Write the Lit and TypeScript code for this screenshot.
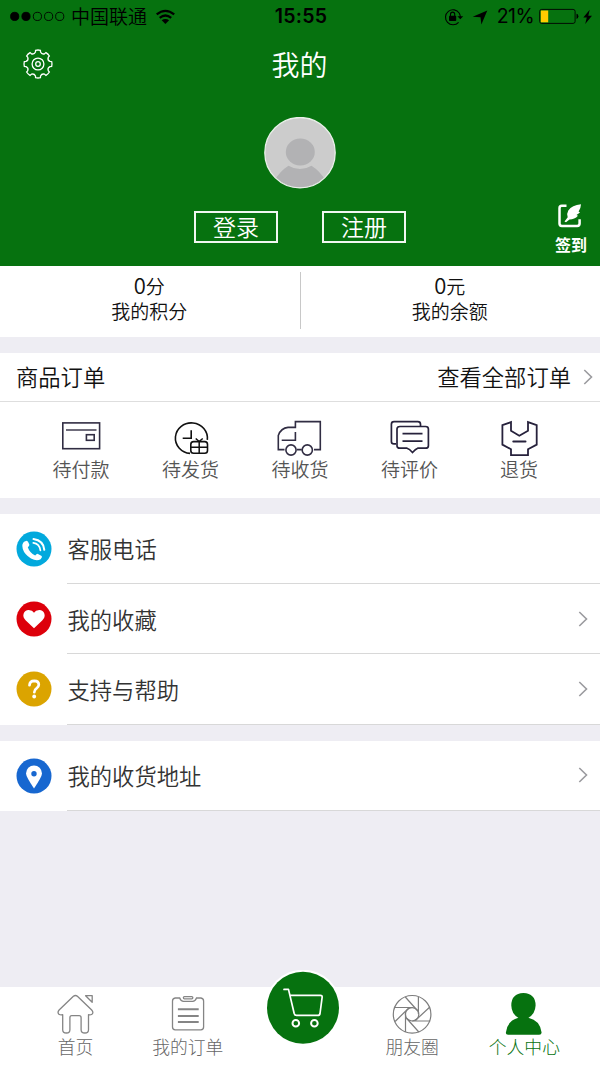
import { LitElement, html, svg, css, SVGTemplateResult } from 'lit';
import { customElement, property } from 'lit/decorators.js';

const gearPath = (() => {
  const at = (r: number, deg: number) => {
    const a = (deg * Math.PI) / 180;
    return `${(15 + r * Math.cos(a)).toFixed(2)} ${(15 + r * Math.sin(a)).toFixed(2)}`;
  };
  let d = `M${at(13.9, -11)}`;
  for (let i = 0; i < 8; i++) {
    const t = i * 45;
    d += `Q${at(14.3, t)} ${at(13.9, t + 10)}L${at(12.2, t + 12)}Q${at(10, t + 22.5)} ${at(12.2, t + 33)}L${at(13.9, t + 35)}`;
  }
  return d + 'Z';
})();

interface Glyph {
  box: [number, number, number, number];
  body: SVGTemplateResult;
}

const glyphs: Record<string, Glyph> = {
  signal: {
    box: [9, 10, 56, 13],
    body: svg`<g stroke="#000" stroke-width=".9" fill="none">
      <circle cx="14.7" cy="16.4" r="4.1" fill="#000"/><circle cx="26" cy="16.4" r="4.1" fill="#000"/>
      <circle cx="37.4" cy="16.4" r="4.1"/><circle cx="48.6" cy="16.4" r="4.1"/><circle cx="59.7" cy="16.4" r="4.1"/></g>`,
  },
  wifi: {
    box: [155, 8, 21, 16],
    body: svg`<g fill="none" stroke="#000" stroke-width="2.3"><path d="M156.700 13.400Q165.400 6.400 174.200 13.400"/><path d="M159.700 16.900Q165.400 12.200 171.200 16.900"/></g><path d="M161.700 19.200Q165.400 16.700 169.100 19.200L165.400 22.900Z"/>`,
  },
  lock: {
    box: [444, 7, 21, 18],
    body: svg`<path d="M460.300 12.200A7.500 7.500 0 1 0 459.600 21.300M460.300 12.200Q461.300 14 461.300 16" fill="none" stroke="#000" stroke-width="1.1"/><path d="M458.400 15.200H464.200L461.300 18.300Z"/><rect x="450" y="14.800" width="7.200" height="5.200" rx=".7"/><path d="M451.500 15V13.200a2.100 2.100 0 0 1 4.200 0V15" fill="none" stroke="#000" stroke-width="1.100"/>`,
  },
  location: { box: [473, 8, 16, 16], body: svg`<path d="M488.300 9.400L482.400 23.500L481.500 16.200L473.700 15.700Z"/>` },
  battery: {
    box: [539, 8, 41, 17],
    body: svg`<rect x="539.700" y="9.400" width="35.400" height="14" rx="2" fill="none" stroke="#000" stroke-width=".9"/><rect x="540.800" y="10.500" width="7.400" height="11.800" fill="#ffcc00"/><path d="M576.500 13.700Q578.400 14 578.400 16.300T576.500 19Z"/>`,
  },
  bolt: { box: [582, 8, 11, 16], body: svg`<path d="M589.700 8.800L583.300 16.500H586.800L585.200 23.100L592 14.800H588.300Z"/>` },
  gear: {
    box: [0, 0, 30, 30],
    body: svg`<g fill="none" stroke="#fff" stroke-width="1.300"><path d=${gearPath}/><circle cx="15" cy="15" r="5.900"/><circle cx="15" cy="15" r="2.300"/></g>`,
  },
  avatar: {
    box: [264, 117, 72, 72],
    body: svg`<clipPath id="round"><circle cx="300" cy="152.700" r="34.800"/></clipPath><circle cx="300" cy="152.700" r="35.200" fill="#ccc"/><g clip-path="url(#round)"><path fill="#b2b2b4" d="M274 181Q280 171 288.500 165.700Q300 172.500 311.500 165.700Q320 171 326 181V192H274Z"/></g><ellipse cx="300.300" cy="152" rx="14.500" ry="13.500" fill="#b2b2b4"/><circle cx="300" cy="152.700" r="35.200" fill="none" stroke="#eaf0ea" stroke-width="1.300"/>`,
  },
  sign: {
    box: [558, 203, 26, 26],
    body: svg`<path d="M566.500 205.800H561.800Q559.500 205.800 559.500 208.200V223.500Q559.500 225.900 561.800 225.900H577.200Q579.600 225.900 579.600 223.500V219.300" fill="none" stroke="#fff" stroke-width="2.500"/><path fill="#fff" d="M581 204.200Q572 205 568.300 210.500Q566.300 214 567.700 217.300L564.500 221.600L566 222.200L569.500 219.500Q574.500 219.500 578 215.700L576.500 215L580 212.600L578.600 211.600Q580.800 208.500 581 204.200Z"/>`,
  },
  pay: {
    box: [58, 418, 46, 38],
    body: svg`<g fill="none" stroke="#312d43"><rect x="62.800" y="422.900" width="36.800" height="25.800" stroke-width="1.600"/><path d="M66 430H96.500" stroke-width="1.400"/><rect x="86.400" y="434.700" width="7.800" height="5.600" stroke-width="1.600"/></g>`,
  },
  ship: {
    box: [167.5, 418, 46, 38],
    body: svg`<g fill="none" stroke="#111" stroke-width="1.600"><path d="M189.500 453.400A16 15.300 0 1 1 206.800 439.800"/><path d="M182.200 438.300H190.700V430.300"/><rect x="190.300" y="441.600" width="16.700" height="11.700" rx="2.800"/><path d="M190.300 447.200H207M198.700 441.600V453.300M195.200 438.500L198.700 441.600L202.200 438.500" stroke-width="1.500"/></g>`,
  },
  receive: {
    box: [277, 418, 46, 38],
    body: svg`<g fill="none" stroke="#312d43" stroke-width="1.600"><path d="M284.500 449.600H278.300V435.500Q281 428 288 427.400H295.400V421.600H320.300V449.600H314"/><path d="M295.400 432.100V440.200H281.700M297 449.600H301.800"/><circle cx="291" cy="450" r="5.100"/><circle cx="307.300" cy="450" r="5.100"/></g>`,
  },
  review: {
    box: [386.5, 418, 46, 38],
    body: svg`<g fill="none" stroke="#27223c" stroke-width="1.700"><path d="M395.500 443.900H393.500Q390.900 443.900 390.900 441.500V424.200Q390.900 421.700 393.500 421.700H417.300Q420 421.700 420 424.300V426.300"/><path d="M399.500 426.500H425Q427.900 426.500 427.900 429V445.700Q427.900 448.200 425 448.200H417.200Q415 449 412 452.500Q409 449 406.500 448.200H399.500Q396.500 448.200 396.500 445.700V429Q396.500 426.500 399.500 426.500Z"/><path d="M402 433.600H422M402 441.200H422"/></g>`,
  },
  refund: {
    box: [496, 418, 46, 38],
    body: svg`<path d="M502.400 425.200L511 422.100V430.800L519.300 435.700L528 430.800V422.100L536.700 425.200V444.600L528 449.200V455.100H511V449.200L502.400 444.600Z" fill="none" stroke="#27223c" stroke-width="1.800"/><path d="M513.300 441.400H525.500" stroke="#27223c" stroke-width="2" stroke-linecap="round"/>`,
  },
  phone: {
    box: [0, 0, 36, 36],
    body: svg`<circle cx="18" cy="18" r="17.500" fill="#02a9dd"/><path fill="#fff" d="M8.500 10.600L10.800 9.800Q12 10 13.400 13.700Q13.400 15 11.800 16.200Q13.500 21.500 19.200 24.600Q20.500 23 21.500 22.800L25.700 25Q26.700 26 24.600 28.200Q20.700 30.500 15 27.500Q8.500 23.500 6.800 18Q5.200 12.800 8.500 10.600Z"/><g fill="none" stroke="#fff" stroke-width="1.700" stroke-linecap="round"><path d="M17.300 11.800Q23.500 12.500 24.400 19.300"/><path d="M17.500 8.100Q27.500 9.700 28.300 18.800" stroke-width="2"/></g>`,
  },
  heart: {
    box: [0, 0, 36, 36],
    body: svg`<circle cx="18" cy="18" r="17.500" fill="#dd000b"/><path fill="#fff" d="M18 27.300L9.800 19.600Q6.500 16 7.600 12.700Q9 9 12.800 9.100Q16.500 9.200 18 11.700Q19.500 9.200 23.200 9.100Q27 9 28.400 12.700Q29.500 16 26.200 19.600Z"/>`,
  },
  help: {
    box: [0, 0, 36, 36],
    body: svg`<circle cx="18" cy="18" r="17.500" fill="#dba400"/><path d="M13.500 14.200Q13.700 9.900 18.300 9.900Q22.800 10 22.800 13.700Q22.800 15.700 20.500 17.300Q18.300 18.700 18.300 21.200" fill="none" stroke="#fff" stroke-width="2.700" stroke-linecap="round"/><circle cx="18.200" cy="25.500" r="1.900" fill="#fff"/>`,
  },
  pin: {
    box: [0, 0, 36, 36],
    body: svg`<circle cx="18" cy="18" r="17.500" fill="#1767d0"/><path fill="#fff" d="M18 30.600Q10 18.600 10 15.600A8 8.200 0 0 1 26 15.600Q26 18.600 18 30.600Z"/><circle cx="18" cy="15.800" r="2.700" fill="#1767d0"/>`,
  },
  chevron: { box: [0, 0, 11, 18], body: svg`<path d="M1.300 2L8.500 9L1.300 16" fill="none" stroke="#9b9b9f" stroke-width="1.600"/>` },
  home: {
    box: [53.6, 992, 44, 44],
    body: svg`<g fill="none" stroke="#858585" stroke-width="1.300" stroke-linejoin="round"><path d="M73 996.300Q75 994.700 77 996.300L91.300 1010Q93.500 1012.500 91.500 1014.200Q90 1015.200 88.100 1014.700V1029.700Q88.100 1033 84.500 1033Q80.700 1033 80.700 1029.700V1017.700Q80.700 1015.700 78.700 1015.700H71.300Q69.500 1015.700 69.500 1017.700V1029.700Q69.500 1033 66 1033Q62.300 1033 62.300 1029.700V1014.700Q60 1015.200 58.500 1014.200Q56.700 1012.300 58.700 1010Z"/><path d="M85.200 995.700H91.800V1002.300Z"/></g>`,
  },
  orders: {
    box: [165.8, 992, 44, 44],
    body: svg`<g fill="none" stroke="#858585" stroke-width="1.300"><path d="M179.500 998H175Q172.300 998.500 172.300 1001V1027Q172.300 1029.800 175 1029.800H200.700Q203.400 1029.800 203.400 1027V1001Q203.400 998.500 200.700 998H196.300Q195 1001.400 192.500 1001.400H183.300Q180.700 1001.400 179.500 998Z"/><rect x="183.200" y="996.600" width="9.400" height="2.200" rx="1"/><path d="M177.700 1009.300H198.500M177.700 1016H198.500M177.700 1022H198.500" stroke-width="1.900"/></g>`,
  },
  cart: {
    box: [264, 970, 78, 74],
    body: svg`<circle cx="303" cy="1007.700" r="38" fill="#fff"/><circle cx="303" cy="1007.700" r="36" fill="#06720f"/><g fill="none" stroke="#fff" stroke-width="1.700" stroke-linejoin="round" stroke-linecap="round"><path d="M284 989.400H288.500L294.200 1013.500Q294.700 1015.400 296.500 1015.400H317.700Q319.700 1015.400 320 1013.500L322.200 996.800Q322.200 995.300 320.500 995.300H290.500"/><circle cx="295.800" cy="1023.300" r="3.300" stroke-width="2"/><circle cx="314.400" cy="1023.300" r="3.300" stroke-width="2"/></g>`,
  },
  circle: {
    box: [390.2, 992, 44, 44],
    body: svg`<g fill="none" stroke="#7d7d7d" stroke-width="1.200"><circle cx="412.300" cy="1014.300" r="18.800"/><circle cx="412.300" cy="1014.300" r="6.700"/><path d="M405.500 997L418 1011M418.600 997V1014M429.500 1007.500L415.500 1020.500M430.500 1021H412.300M419 1032L406.500 1018M405.700 1032V1013.500M395.300 1021.500L409 1008M394.500 1007.500H413"/></g>`,
  },
  person: {
    box: [502.4, 992, 44, 44],
    body: svg`<path fill="#06720f" d="M523.800 993Q536 993.500 536 1005.500Q535.600 1014 528.800 1017.700Q540.500 1020.300 542 1032.500Q542 1034.700 539.500 1034.700H508.500Q506 1034.700 506.300 1032.500Q508 1020.300 518.800 1017.700Q511.900 1014 511.700 1005.500Q511.700 993.500 523.800 993Z"/>`,
  },
};

@customElement('ui-icon')
export class UiIcon extends LitElement {
  @property() name = '';
  static styles = css`
    :host { display: block; flex: none; line-height: 0; }
    svg { display: block; }
  `;
  render() {
    const g = glyphs[this.name];
    return html`<svg width=${g.box[2]} height=${g.box[3]} viewBox=${g.box.join(' ')}>${g.body}</svg>`;
  }
}

const orderStates = [
  ['pay', '待付款'],
  ['ship', '待发货'],
  ['receive', '待收货'],
  ['review', '待评价'],
  ['refund', '退货'],
];
const services: [string, string, boolean][] = [
  ['phone', '客服电话', false],
  ['heart', '我的收藏', true],
  ['help', '支持与帮助', true],
];

@customElement('app-root')
export class AppRoot extends LitElement {
  static styles = css`
    :host {
      display: flex; flex-direction: column; box-sizing: border-box;
      width: 600px; height: 1067px; overflow: hidden; background: #eeedf3; color: #111;
      font-family: 'Noto Sans CJK SC', sans-serif; font-weight: 350;
    }
    * { box-sizing: border-box; }
    .header { height: 265.5px; flex: none; background: #06720f; color: #fff; }
    .status { display: grid; grid-template-columns: 1fr auto 1fr; height: 33px; align-items: center; color: #000; padding: 0 7px 0 9px; }
    .left, .right { display: flex; align-items: center; }
    .carrier { font-size: 19px; line-height: 32px; height: 33px; margin: 0 8px 0 6px; }
    .clock { font: 600 19.5px/33px Inter, sans-serif; letter-spacing: .2px; }
    .right { justify-content: flex-end; }
    .percent { font: 400 19.5px/33px Inter, sans-serif; margin: 0 5px 0 9px; letter-spacing: -.6px; }
    .plane { margin-left: 8px; }
    .bolt { margin-left: 2px; }
    .nav { display: grid; grid-template-columns: 1fr auto 1fr; align-items: center; height: 62px; padding: 0 24px 0 23px; }
    .title { font-size: 28px; line-height: 62px; }
    .profile { display: grid; grid-template-columns: 1fr auto 1fr; padding-top: 22px; }
    .account { grid-column: 2; display: flex; flex-direction: column; align-items: center; gap: 22px; }
    .actions { display: flex; gap: 44px; }
    .action { width: 84px; height: 32px; border: 2px solid #f1f7f1; font-size: 23px; line-height: 27px; text-align: center; }
    .sign { display: flex; flex-direction: column; align-items: center; justify-self: end; align-self: end; margin-right: 13px; font-size: 16px; line-height: 20px; font-weight: 700; gap: 5px; position: relative; top: 11px; }
    .stats { display: flex; height: 71.5px; flex: none; background: #fff; text-align: center; padding-top: 6.5px; }
    .stat { flex: 1; font-size: 19px; line-height: 25px; }
    .stat + .stat { border-left: 1px solid #c8c8c8; height: 57px; }
    .stat div { margin-right: 1px; }
    .amount { font-size: 22px; line-height: 24px; }
    .card { background: #fff; margin-top: 16px; flex: none; }
    .heading { display: flex; align-items: center; height: 49px; padding: 0 6px 0 16px; border-bottom: 1px solid #dedede; font-size: 22.3px; }
    .heading span { padding-bottom: 2px; }
    .grow { flex: 1; }
    .heading ui-icon { margin-left: 12px; }
    .states { display: grid; grid-template-columns: repeat(5, 109.5px); justify-content: center; height: 95.5px; }
    .state { display: flex; flex-direction: column; align-items: center; color: #555; font-size: 19px; line-height: 24px; }
    .pic { height: 55px; padding-top: 16px; }
    .row { display: flex; height: 70.4px; padding-left: 15.5px; }
    .badge { align-self: center; margin-right: 15.5px; }
    .line { flex: 1; display: flex; align-items: center; border-bottom: 1px solid #d8d8d8; color: #333; font-size: 22.3px; padding: 0 11px 0 .5px; }
    .tabs { height: 80px; margin-top: auto; flex: none; display: grid; grid-template-columns: repeat(5, 112.2px); justify-content: center; background: #fff; }
    .tab { display: flex; flex-direction: column; align-items: center; font-size: 17.8px; line-height: 21px; color: #666; font-weight: 300; }
    .tabpic { height: 49px; display: flex; align-items: flex-end; }
    .tab.active { color: #06720f; }
    .tab .cart { position: relative; top: 8px; left: 3px; }
  `;

  private service([icon, label, more]: [string, string, boolean]) {
    return html`<div class="row">
      <ui-icon class="badge" name=${icon}></ui-icon>
      <div class="line"><span class="grow">${label}</span>${more ? html`<ui-icon name="chevron"></ui-icon>` : ''}</div>
    </div>`;
  }

  private tab(icon: string, label: string, active = false) {
    return html`<div class="tab ${active ? 'active' : ''}"><div class="tabpic"><ui-icon name=${icon}></ui-icon></div>${label}</div>`;
  }

  render() {
    return html`
      <header class="header">
        <div class="status">
          <div class="left"><ui-icon name="signal"></ui-icon><span class="carrier">中国联通</span><ui-icon name="wifi"></ui-icon></div>
          <span class="clock">15:55</span>
          <div class="right">
            <ui-icon name="lock"></ui-icon><ui-icon class="plane" name="location"></ui-icon>
            <span class="percent">21%</span><ui-icon name="battery"></ui-icon><ui-icon class="bolt" name="bolt"></ui-icon>
          </div>
        </div>
        <div class="nav"><ui-icon name="gear"></ui-icon><span class="title">我的</span></div>
        <div class="profile">
          <div class="account">
            <ui-icon name="avatar"></ui-icon>
            <div class="actions"><div class="action">登录</div><div class="action">注册</div></div>
          </div>
          <div class="sign"><ui-icon name="sign"></ui-icon>签到</div>
        </div>
      </header>
      <section class="stats">
        <div class="stat"><div><span class="amount">0</span>分</div><div>我的积分</div></div>
        <div class="stat"><div><span class="amount">0</span>元</div><div>我的余额</div></div>
      </section>
      <section class="card">
        <div class="heading"><span class="grow">商品订单</span><span>查看全部订单</span><ui-icon name="chevron"></ui-icon></div>
        <div class="states">
          ${orderStates.map(([icon, label]) => html`<div class="state"><div class="pic"><ui-icon name=${icon}></ui-icon></div>${label}</div>`)}
        </div>
      </section>
      <section class="card">${services.map((s) => this.service(s))}</section>
      <section class="card">${this.service(['pin', '我的收货地址', true])}</section>
      <nav class="tabs">
        ${this.tab('home', '首页')}${this.tab('orders', '我的订单')}
        <div class="tab"><div class="tabpic"><ui-icon class="cart" name="cart"></ui-icon></div></div>
        ${this.tab('circle', '朋友圈')}${this.tab('person', '个人中心', true)}
      </nav>
    `;
  }
}
